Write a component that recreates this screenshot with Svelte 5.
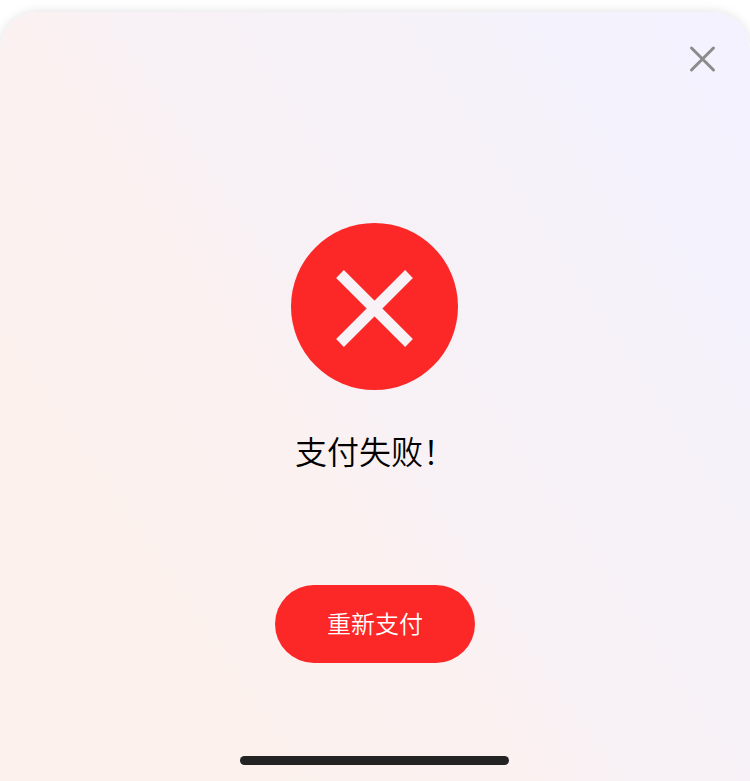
<script>
  let { title = '支付失败！', action = '重新支付' } = $props();
</script>

<main class="screen">
  <section class="sheet">
    <header class="top">
      <button class="close" aria-label="关闭">
        <svg width="30" height="30" viewBox="0 0 30 30" fill="none">
          <path d="M3.5 4 25.5 26M25.5 4 3.5 26" stroke="#8b8b8b" stroke-width="3" stroke-linecap="round" />
        </svg>
      </button>
    </header>
    <div class="result">
      <svg class="badge" width="167" height="167" viewBox="0 0 167 167" fill="none">
        <circle cx="83.5" cy="83.5" r="83.5" fill="#fc2727" />
        <path d="M49 51 118 120M118 51 49 120" stroke="#f8f1f6" stroke-width="11" />
      </svg>
      <h1>{title}</h1>
      <button class="retry">{action}</button>
    </div>
    <footer class="bottom"><span class="handle"></span></footer>
  </section>
</main>

<style>
  .screen {
    box-sizing: border-box;
    width: 750px;
    height: 781px;
    padding-top: 12px;
    overflow: hidden;
    background: #fff;
    font-family: 'Noto Sans CJK SC', sans-serif;
  }
  .sheet {
    box-sizing: border-box;
    height: 769px;
    display: flex;
    flex-direction: column;
    border-radius: 38px 38px 0 0;
    background: linear-gradient(56deg, #fcf1ec 0%, #fcf1ed 20%, #fbf1f1 42%, #f8f1f5 50%, #f5f2f9 76%, #f4f2fd 86%, #f4f2ff 100%);
    box-shadow: 0 0 12px rgba(0, 0, 0, 0.13);
  }
  .top {
    display: flex;
    justify-content: flex-end;
    padding: 32px 32px 0 0;
  }
  button {
    border: 0;
    padding: 0;
    font-family: inherit;
    cursor: pointer;
  }
  .close {
    width: 30px;
    height: 30px;
    background: none;
  }
  .close svg,
  .badge {
    display: block;
  }
  .result {
    display: flex;
    flex-direction: column;
    align-items: center;
    padding-top: 149px;
  }
  .badge {
    margin-right: 1px;
  }
  h1 {
    margin: 36px 0 0;
    font-size: 32px;
    line-height: 48px;
    font-weight: 350;
    color: #000;
  }
  .retry {
    width: 200px;
    height: 78px;
    margin-top: 111px;
    padding-bottom: 2px;
    border-radius: 39px;
    background: #fc2727;
    color: #fff;
    font-size: 24px;
    line-height: 36px;
    font-weight: 350;
  }
  .bottom {
    display: flex;
    justify-content: center;
    margin-top: auto;
    padding: 0 1px 16px 0;
  }
  .handle {
    width: 269px;
    height: 9px;
    border-radius: 5px;
    background: #232323;
  }
</style>
